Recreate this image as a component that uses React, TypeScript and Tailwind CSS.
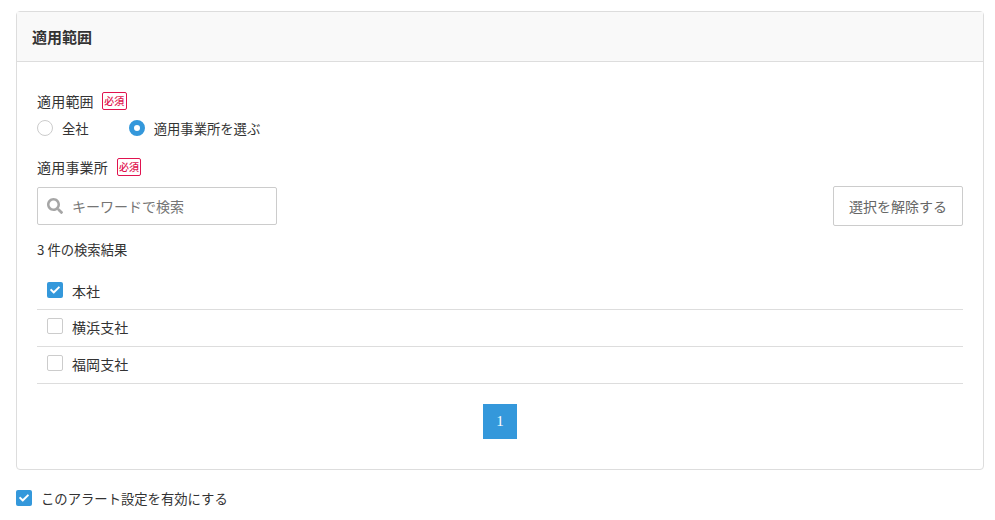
import { FaCheck, FaSearch } from 'react-icons/fa';

const font = { fontFamily: '"Noto Sans CJK JP", "Noto Sans", sans-serif' };

function Required({ className }: { className?: string }) {
  return (
    <span className={`flex h-[18px] items-center justify-center rounded-[2px] border border-[#e0134f] text-[10px] font-medium leading-none text-[#e0134f] ${className ?? 'w-[25px]'}`}>
      必須
    </span>
  );
}

function CheckBox({ checked }: { checked?: boolean }) {
  if (checked) {
    return (
      <span className="flex h-4 w-4 shrink-0 items-center justify-center rounded-[2px] bg-[#3498db]">
        <FaCheck className="h-[10px] w-[10px] text-white" />
      </span>
    );
  }
  return <span className="h-4 w-4 shrink-0 rounded-[2px] border border-[#cccccc] bg-white" />;
}

const offices = [
  { name: '本社', checked: true },
  { name: '横浜支社', checked: false },
  { name: '福岡支社', checked: false },
];

export default function App() {
  return (
    <div style={font} className="h-[520px] w-[995px] overflow-hidden bg-white pl-4 pr-[11px] pt-[11px] text-[#333333]">
      <div className="h-[459px] rounded border border-[#dddddd]">
        <div className="flex h-[50px] items-center border-b border-[#dddddd] bg-[#f9f9f9] pl-[15px] pt-[2px] text-[15px] font-bold">
          適用範囲
        </div>

        <div className="px-5 pt-[29px]">
          <div className="flex h-5 items-center gap-2 text-sm leading-5">
            <span className="tracking-[0.2px]">適用範囲</span>
            <Required />
          </div>
          <div className="mt-[7px] flex h-5 items-center text-[13.33px] leading-5">
            <span className="h-4 w-4 rounded-full border border-[#cccccc] bg-white" />
            <span className="ml-[9px] pt-[2px]">全社</span>
            <span className="ml-10 h-4 w-4 rounded-full border-[5px] border-[#3498db] bg-white" />
            <span className="ml-[9px] pt-[2px]">適用事業所を選ぶ</span>
          </div>

          <div className="mt-[19px] flex h-5 items-center gap-[9px] text-sm leading-5">
            <span className="tracking-[0.2px]">適用事業所</span>
            <Required className="w-6" />
          </div>

          <div className="mt-[9px] flex h-10 items-center justify-between">
            <div className="flex h-[38px] w-60 items-center rounded-[2px] border border-[#cccccc] pl-[9px] text-sm text-[#757575]">
              <FaSearch className="h-4 w-4 text-[#a6a6a6]" />
              <span className="ml-[9px]">キーワードで検索</span>
            </div>
            <div className="flex h-10 w-[130px] items-center justify-center rounded-[2px] border border-[#cccccc] text-sm text-[#666666]">
              選択を解除する
            </div>
          </div>

          <div className="mt-[14px] h-5 text-[13.33px] leading-5">3 件の検索結果</div>

          <div className="mt-[13px]">
            {offices.map((o) => (
              <div key={o.name} className="flex h-[37px] items-center border-b border-[#dddddd] pb-1 pl-[10px] text-sm first:pb-[2px]">
                <CheckBox checked={o.checked} />
                <span className="ml-[9px] pt-[2px] tracking-[0.1px]">{o.name}</span>
              </div>
            ))}
          </div>

          <div className="mt-5 flex justify-center">
            <span className="flex h-[35px] w-[34px] items-center justify-center bg-[#3498db] font-['Liberation_Serif',serif] text-[15px] text-white">1</span>
          </div>
        </div>
      </div>

      <div className="mt-5 flex h-4 items-center text-[13.33px]">
        <CheckBox checked />
        <span className="ml-[9px] pt-[2px]">このアラート設定を有効にする</span>
      </div>
    </div>
  );
}
